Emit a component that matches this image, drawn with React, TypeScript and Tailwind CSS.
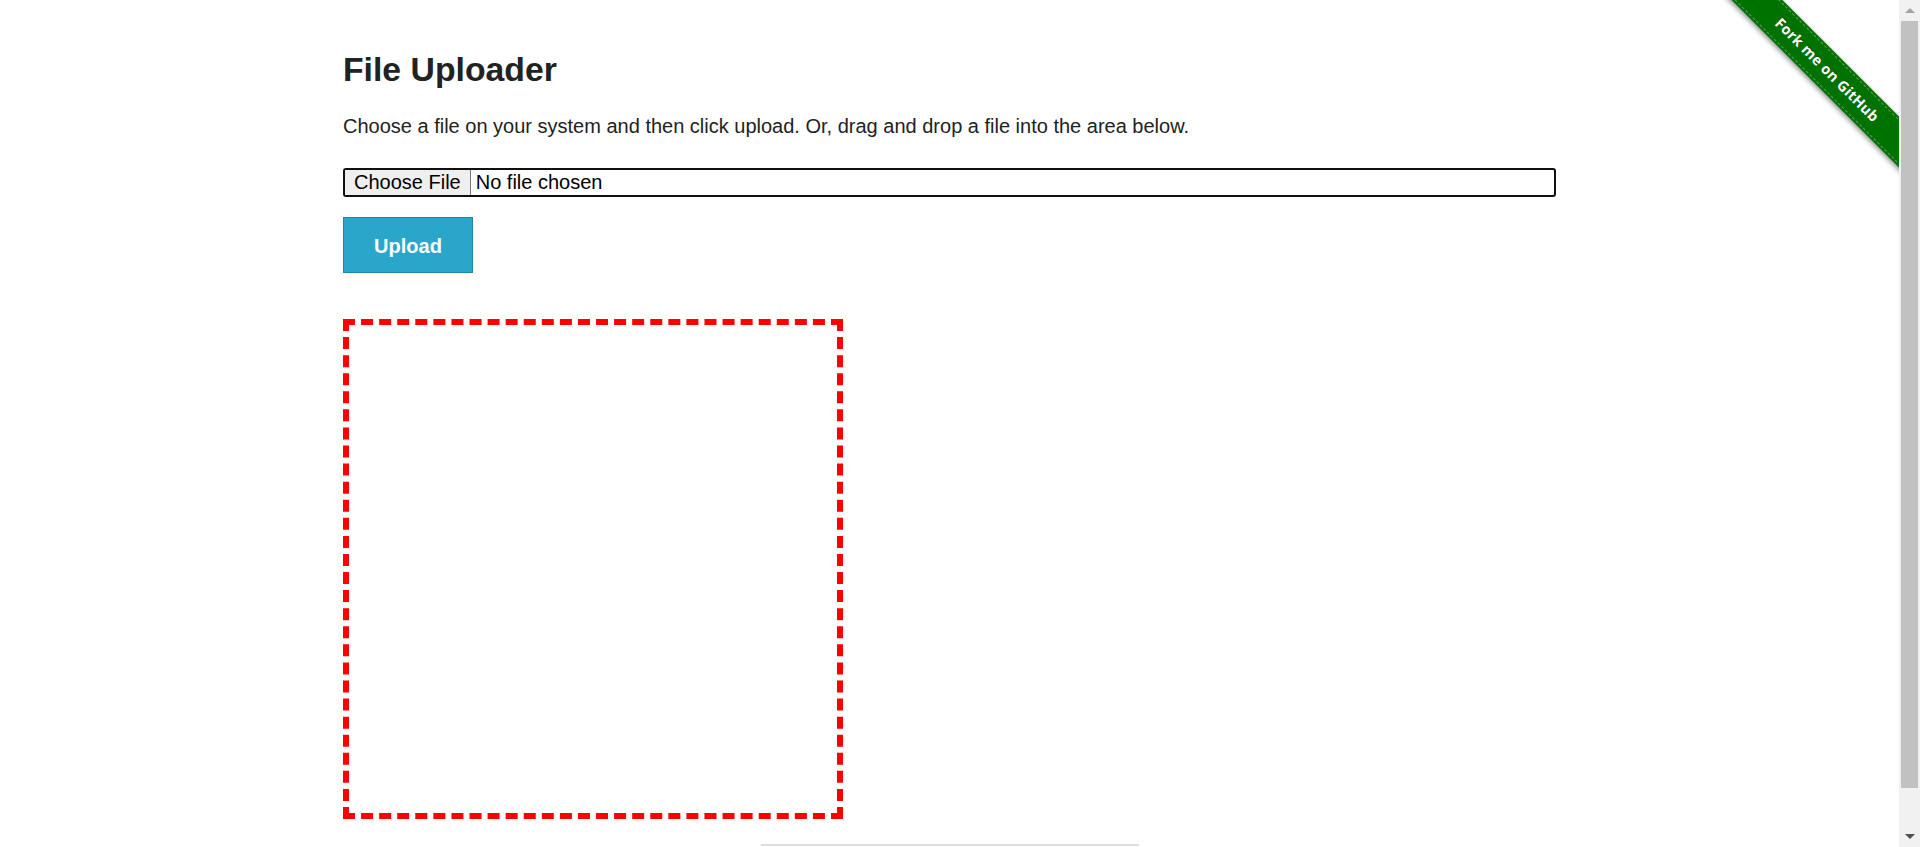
import React from "react";

function Ribbon() {
  return (
    <div className="absolute right-[-68px] top-[51.5px] h-[36px] w-[280px] rotate-45 bg-[#007200] shadow-[0_2px_5px_rgba(0,0,0,0.45)] pointer-events-none">
      <div className="absolute inset-x-0 top-[2px] bottom-[2px] border-y border-dashed border-[#ffffff55]" />
      <div className="relative flex h-full items-center justify-center text-[14.5px] font-bold tracking-[0.2px] text-white [font-family:'Open_Sans','Liberation_Sans',sans-serif] [text-shadow:0_-1px_0_rgba(0,0,0,0.35)]">
        Fork me on GitHub
      </div>
    </div>
  );
}

function Scrollbar() {
  return (
    <div className="flex h-[847px] w-[21px] shrink-0 flex-col bg-[#f1f1f1]">
      <div className="flex h-[21px] items-center justify-center">
        <div className="h-0 w-0 border-x-[5px] border-b-[5px] border-x-transparent border-b-[#a3a3a3]" />
      </div>
      <div className="mx-[2px] h-[767px] bg-[#c1c1c1]" />
      <div className="flex-1" />
      <div className="flex h-[21px] items-center justify-center">
        <div className="h-0 w-0 border-x-[5px] border-t-[5px] border-x-transparent border-t-[#505050]" />
      </div>
    </div>
  );
}

export default function App() {
  return (
    <div className="flex h-[847px] w-full overflow-hidden bg-white [font-family:'Liberation_Sans',Arial,sans-serif]">
      <div className="relative flex-1 overflow-hidden">
        <Ribbon />
        <div className="mx-auto flex w-[1213px] flex-col">
          <h3 className="mt-[48px] text-[33.75px] font-bold leading-[42px] text-[#222222]">
            File Uploader
          </h3>
          <p className="mt-[20px] text-[20px] leading-[32px] text-[#222222]">
            Choose a file on your system and then click upload. Or, drag and drop a file into the area below.
          </p>
          <div className="mt-[26px] flex h-[29px] w-full items-stretch overflow-hidden rounded-[3px] border-2 border-[#101010] text-[20px] leading-[23px] text-black">
            <span className="flex items-center border-r border-[#767676] bg-[#efefef] px-[9px]">
              Choose File
            </span>
            <span className="ml-[5px] flex items-center">No file chosen</span>
          </div>
          <button className="mt-[20px] flex h-[56px] w-[130px] items-center justify-center border border-[#2284a1] bg-[#2ba6cb] pt-[2px] text-[20px] font-bold text-white">
            Upload
          </button>
          <div className="mt-[46px] h-[500px] w-[500px] border-[6px] border-dashed border-[#ff0000]" />
        </div>
        <div className="mx-auto mt-[25px] h-[2px] w-[378px] bg-[#dddddd]" />
      </div>
      <Scrollbar />
    </div>
  );
}
